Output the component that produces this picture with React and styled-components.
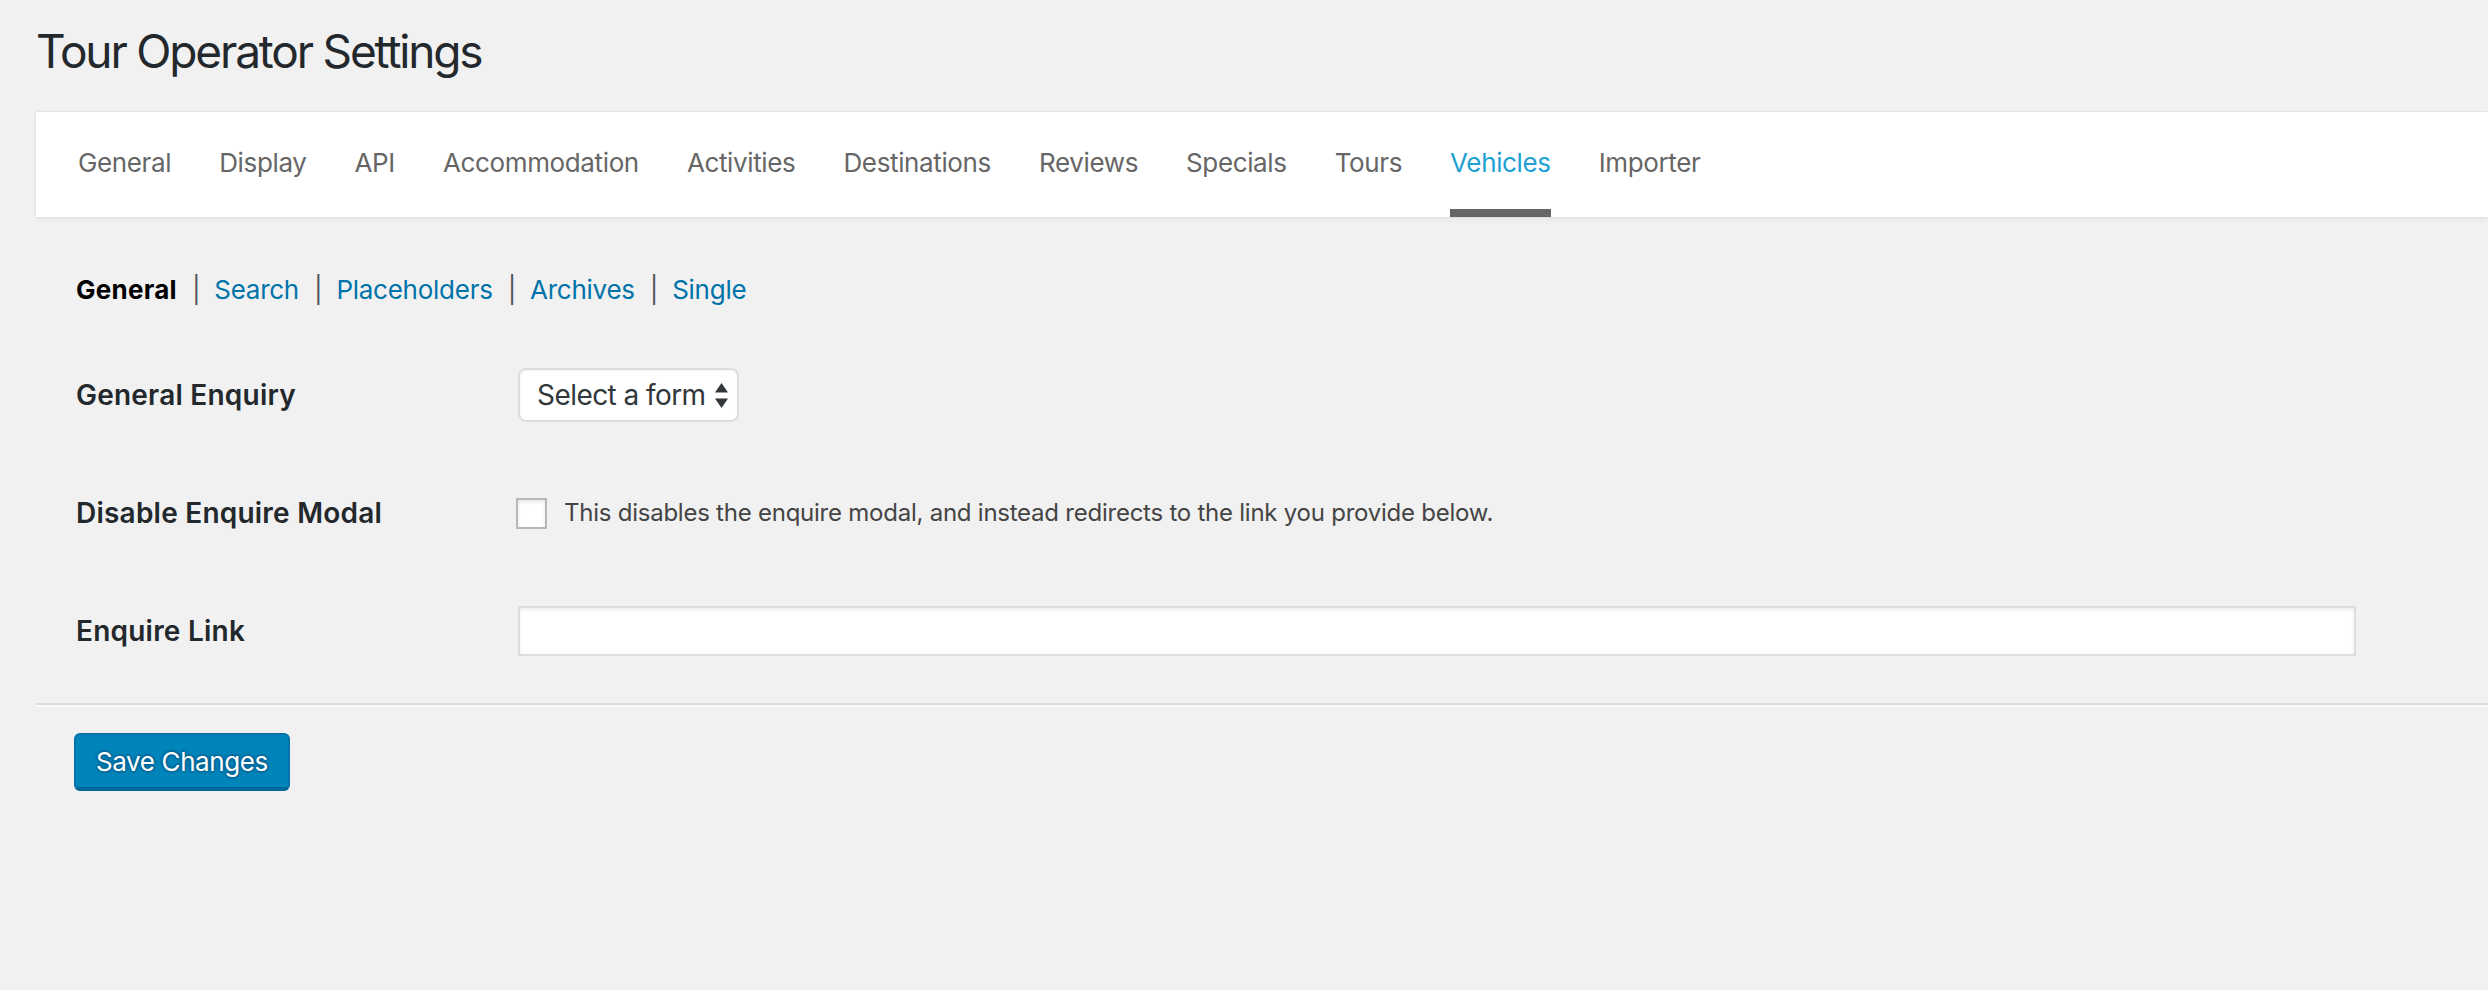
import React from 'react';
import styled, { createGlobalStyle } from 'styled-components';

const GlobalStyle = createGlobalStyle`
  body {
    margin: 0;
    background: #f1f1f1;
    font-family: Inter, 'Liberation Sans', sans-serif;
    color: #23282d;
  }
`;

const Wrap = styled.div`
  padding-left: 36px;
  min-height: 990px;
  box-sizing: border-box;
`;

const Title = styled.h1`
  margin: 0 0 31px;
  padding-top: 21px;
  font-size: 46px;
  line-height: 60px;
  font-weight: 400;
  letter-spacing: -0.047em;
  color: #23282d;
`;

const TabBar = styled.nav`
  display: flex;
  gap: 48px;
  height: 105px;
  padding-left: 42px;
  background: #fff;
  box-shadow: 0 0 2px rgba(0, 0, 0, 0.14), 0 3px 6px rgba(0, 0, 0, 0.04);
`;

const Tab = styled.a`
  padding: 33px 0 28px;
  border-bottom: 8px solid ${({ $active }) => ($active ? '#666' : 'transparent')};
  font-size: 26px;
  line-height: 36px;
  letter-spacing: -0.014em;
  color: ${({ $active }) => ($active ? '#1ea1d3' : '#666')};
  text-decoration: none;
  white-space: nowrap;
`;

const Content = styled.div`
  padding-left: 40px;
`;

const SubNav = styled.ul`
  display: flex;
  align-items: center;
  list-style: none;
  margin: 55px 0 0;
  padding: 0;
  font-size: 26px;
  line-height: 36px;
  letter-spacing: -0.01em;
`;

const SubItem = styled.li`
  display: flex;
  align-items: center;

  & + &::before {
    content: '|';
    color: #50575e;
    margin: 0 14px 0 15px;
  }
`;

const SubLink = styled.a`
  color: ${({ $current }) => ($current ? '#000' : '#0073aa')};
  font-weight: ${({ $current }) => ($current ? 700 : 400)};
  letter-spacing: ${({ $current }) => ($current ? '0.01em' : 'inherit')};
  text-decoration: none;
`;

const Form = styled.div`
  margin-top: 28px;
`;

const Row = styled.div`
  display: grid;
  grid-template-columns: 442px 1fr;
  align-items: center;
  height: 118px;
`;

const Label = styled.label`
  font-size: 28px;
  line-height: 36px;
  font-weight: 600;
  letter-spacing: 0.008em;
  color: #23282d;
`;

const SelectBox = styled.div`
  display: flex;
  align-items: center;
  justify-content: space-between;
  box-sizing: border-box;
  width: 221px;
  height: 54px;
  padding: 0 9px 0 17px;
  background: #fff;
  border: 2px solid #ddd;
  border-radius: 8px;
  box-shadow: inset 0 1px 3px rgba(0, 0, 0, 0.05);
  font-size: 28px;
  letter-spacing: -0.02em;
  color: #32373c;
`;

const CheckRow = styled.div`
  display: flex;
  align-items: center;
  gap: 17px;
  margin-left: -2px;
`;

const Checkbox = styled.input`
  appearance: none;
  margin: 0;
  width: 31px;
  height: 31px;
  box-sizing: border-box;
  background: #fff;
  border: 2px solid #b4b9be;
  box-shadow: inset 0 2px 4px rgba(0, 0, 0, 0.1);
`;

const Description = styled.span`
  font-size: 24px;
  line-height: 32px;
  letter-spacing: -0.01em;
  color: #444;
`;

const TextInput = styled.input`
  box-sizing: border-box;
  width: 1838px;
  height: 50px;
  margin: 0;
  background: #fff;
  border: 2px solid #ddd;
  box-shadow: inset 0 2px 4px rgba(0, 0, 0, 0.07);
  outline: none;
`;

const Divider = styled.hr`
  margin: 13px 0 0;
  border: 0;
  border-top: 2px solid #ddd;
  border-bottom: 2px solid #fafafa;
`;

const Actions = styled.div`
  padding: 26px 0 0 38px;
`;

const SaveButton = styled.button`
  box-sizing: border-box;
  height: 58px;
  padding: 0 20px;
  background: #0085ba;
  border: 2px solid #0073aa;
  border-bottom: 4px solid #006799;
  border-radius: 6px;
  color: #fff;
  font-family: inherit;
  font-size: 26px;
  letter-spacing: -0.015em;
  text-shadow: 0 -2px 2px #006799, 2px 0 2px #006799, 0 2px 2px #006799, -2px 0 2px #006799;
  cursor: pointer;
`;

const tabs = [
  'General',
  'Display',
  'API',
  'Accommodation',
  'Activities',
  'Destinations',
  'Reviews',
  'Specials',
  'Tours',
  'Vehicles',
  'Importer',
];

const subTabs = ['General', 'Search', 'Placeholders', 'Archives', 'Single'];

const SelectArrows = () => (
  <svg width="13" height="25" viewBox="0 0 13 25" fill="#32373c">
    <path d="M6.5 0 L13 9.5 H0 Z" />
    <path d="M6.5 25 L13 15.5 H0 Z" />
  </svg>
);

const App = () => (
  <>
    <GlobalStyle />
    <Wrap>
      <Title>Tour Operator Settings</Title>
      <TabBar>
        {tabs.map(tab => (
          <Tab key={tab} href="#" $active={tab === 'Vehicles'}>
            {tab}
          </Tab>
        ))}
      </TabBar>
      <Content>
        <SubNav>
          {subTabs.map(item => (
            <SubItem key={item}>
              <SubLink href="#" $current={item === 'General'}>
                {item}
              </SubLink>
            </SubItem>
          ))}
        </SubNav>
        <Form>
          <Row>
            <Label>General Enquiry</Label>
            <SelectBox>
              Select a form
              <SelectArrows />
            </SelectBox>
          </Row>
          <Row>
            <Label>Disable Enquire Modal</Label>
            <CheckRow>
              <Checkbox type="checkbox" />
              <Description>
                This disables the enquire modal, and instead redirects to the link you provide below.
              </Description>
            </CheckRow>
          </Row>
          <Row>
            <Label>Enquire Link</Label>
            <TextInput type="text" />
          </Row>
        </Form>
      </Content>
      <Divider />
      <Actions>
        <SaveButton>Save Changes</SaveButton>
      </Actions>
    </Wrap>
  </>
);

export default App;
